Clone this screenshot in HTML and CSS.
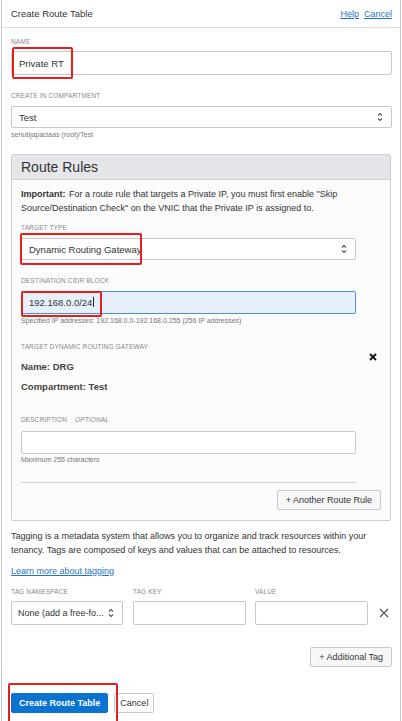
FILE: index.html
```html
<!DOCTYPE html>
<html>
<head>
<meta charset="utf-8">
<link rel="stylesheet" href="styles.css">
</head>
<body>
<div class="dialog">
  <div class="hdr">
    <span class="title">Create Route Table</span>
    <span class="links"><a>Help</a><a>Cancel</a></span>
  </div>
  <div class="content">
    <div class="field f-name">
      <div class="lbl">Name</div>
      <div class="input h24 annotated"><span class="val">Private RT</span><span class="redbox rb-name"></span></div>
    </div>
    <div class="field f-comp">
      <div class="lbl">Create in Compartment</div>
      <div class="input select h22"><span class="val">Test</span>
        <svg class="chev" viewBox="0 0 6 10" width="6" height="10"><path d="M1 3.5 L3 1.5 L5 3.5 M1 6.5 L3 8.5 L5 6.5" fill="none" stroke="#555" stroke-width="1.1"/></svg>
      </div>
      <div class="help">sehubjapaciaas (root)/Test</div>
    </div>

    <div class="rules">
      <div class="rules-hdr">Route Rules</div>
      <div class="rules-body">
        <p class="important"><b>Important:</b> For a route rule that targets a Private IP, you must first enable "Skip Source/Destination Check" on the VNIC that the Private IP is assigned to.</p>
        <div class="rfield f-tt">
          <div class="lbl">Target Type</div>
          <div class="input select h22 annotated"><span class="val">Dynamic Routing Gateway</span>
            <svg class="chev" viewBox="0 0 6 10" width="6" height="10"><path d="M1 3.5 L3 1.5 L5 3.5 M1 6.5 L3 8.5 L5 6.5" fill="none" stroke="#555" stroke-width="1.1"/></svg>
            <span class="redbox rb-tt"></span>
          </div>
        </div>
        <div class="rfield f-cidr">
          <div class="lbl">Destination CIDR Block</div>
          <div class="input focus h23 annotated"><span class="val">192.168.0.0/24<span class="caret"></span></span><span class="redbox rb-cidr"></span></div>
          <div class="help">Specified IP addresses: 192.168.0.0-192.168.0.255 (256 IP addresses)</div>
        </div>
        <div class="drg">
          <div class="lbl">Target Dynamic Routing Gateway</div>
          <div class="kv kv1">Name: DRG</div>
          <div class="kv kv2">Compartment: Test</div>
          <svg class="close-x" viewBox="0 0 8 8" width="8" height="8"><path d="M1 1 L7 7 M7 1 L1 7" stroke="#111" stroke-width="1.8"/></svg>
        </div>
        <div class="rfield f-desc">
          <div class="lbl">Description <i class="opt">Optional</i></div>
          <div class="input h23"></div>
          <div class="help">Maximum 255 characters</div>
        </div>
        <div class="divider"></div>
        <div class="btn-row"><button class="btn">+ Another Route Rule</button></div>
      </div>
    </div>

    <p class="tagging">Tagging is a metadata system that allows you to organize and track resources within your tenancy. Tags are composed of keys and values that can be attached to resources.</p>
    <a class="learn">Learn more about tagging</a>

    <div class="tags">
      <div class="tcol t-ns">
        <div class="lbl">Tag Namespace</div>
        <div class="input select h24"><span class="val">None (add a free-fo...</span>
          <svg class="chev" viewBox="0 0 6 10" width="6" height="10"><path d="M1 3.5 L3 1.5 L5 3.5 M1 6.5 L3 8.5 L5 6.5" fill="none" stroke="#555" stroke-width="1.1"/></svg>
        </div>
      </div>
      <div class="tcol t-key">
        <div class="lbl">Tag Key</div>
        <div class="input h24"></div>
      </div>
      <div class="tcol t-val">
        <div class="lbl">Value</div>
        <div class="input h24"></div>
      </div>
      <svg class="tag-x" viewBox="0 0 10 10" width="10" height="10"><path d="M1 1 L9 9 M9 1 L1 9" stroke="#555" stroke-width="1.1"/></svg>
    </div>

    <div class="btn-row add-tag"><button class="btn">+ Additional Tag</button></div>

    <div class="footer annotated">
      <button class="btn primary">Create Route Table</button>
      <button class="btn cancel">Cancel</button>
      <span class="redbox rb-create"></span>
    </div>
  </div>
</div>
</body>
</html>
```

FILE: styles.css
```css
* { box-sizing: border-box; }
html, body { margin: 0; padding: 0; background: #fff; }
body {
  font-family: "Liberation Sans", Arial, sans-serif;
  color: #333;
}
.dialog {
  margin: 0 1px;
  height: 721px;
  border-left: 1px solid #c9c9c9;
  border-right: 1px solid #c9c9c9;
  overflow: hidden;
}
.hdr {
  height: 28px;
  border-bottom: 1px solid #dcdcdc;
  display: flex;
  align-items: center;
  justify-content: space-between;
  padding: 0 8px 0 9px;
}
.title { font-size: 9.5px; color: #333; }
.links { display: flex; gap: 5px; font-size: 9px; }
.links a { color: #1f74c8; text-decoration: underline; }

.content { padding: 10px 8px 0 9px; }

.lbl {
  font-size: 6.5px;
  line-height: 8px;
  text-transform: uppercase;
  color: #8a8a8a;
  letter-spacing: 0.15px;
  margin-bottom: 6px;
}
.input {
  position: relative;
  border: 1px solid #c8c8c8;
  border-radius: 2px;
  background: #fff;
  display: flex;
  align-items: center;
  padding: 0 7px;
  font-size: 9.5px;
  color: #333;
}
.h24 { height: 24px; }
.h23 { height: 23px; }
.h22 { height: 22px; }
.select .val { flex: 1; white-space: nowrap; }
.chev { position: absolute; right: 8px; top: 50%; margin-top: -5px; }
.help { font-size: 7px; line-height: 9px; color: #777; margin-top: 2px; }

.f-name .lbl { margin-bottom: 5px; }
.f-comp { margin-top: 17px; }

.annotated { position: relative; }
.redbox {
  position: absolute;
  border: 2px solid #e3201e;
  border-radius: 2px;
  pointer-events: none;
}
.rb-name { left: 0px; top: -5px; width: 61px; height: 32px; }
.rb-tt { left: -2px; top: -6px; width: 122px; height: 32px; }
.rb-cidr { left: -1px; top: -1px; width: 81px; height: 26px; }
.rb-create { left: -3px; top: -10px; width: 110px; height: 40px; }

.rules {
  margin-top: 15px;
  margin-right: 1px;
  border: 1px solid #cfcfcf;
  border-radius: 2px;
}
.rules-hdr {
  height: 25px;
  background: #e4e6e9;
  border-bottom: 1px solid #cfcfcf;
  font-size: 14px;
  line-height: 24px;
  padding-left: 9px;
  color: #333;
}
.rules-body {
  background: #fbfbfb;
  padding: 7px 9px 10px 9px;
}
.important {
  margin: 0;
  font-size: 9px;
  line-height: 14px;
  color: #333;
}
.important b { font-weight: bold; color: #333; margin-right: 1px; }
.rfield { width: 335px; }
.f-tt { margin-top: 9px; }
.f-cidr { margin-top: 17px; }
.focus {
  background: #e8f0fc;
  border: 1.5px solid #4a8fe0;
}
.caret { display: inline-block; width: 1px; height: 10px; background: #222; vertical-align: -1px; margin-left: 1px; }

.drg { position: relative; margin-top: 18px; }
.drg .lbl { margin-bottom: 10px; }
.kv { font-size: 9.5px; line-height: 12px; font-weight: bold; color: #444; }
.kv2 { margin-top: 8px; }
.close-x { position: absolute; right: 4px; top: 10px; }

.f-desc { margin-top: 23px; }
.f-desc .lbl { margin-bottom: 7px; }
.opt { margin-left: 6px; font-style: italic; }
.f-desc .help { margin-top: 1px; }

.divider { width: 335px; height: 1px; background: #cfcfcf; margin-top: 18px; }
.btn-row { display: flex; justify-content: flex-end; margin-top: 7px; }
.btn {
  font-family: "Liberation Sans", Arial, sans-serif;
  font-size: 9px;
  height: 20px;
  padding: 0 8px;
  border: 1px solid #c8c8c8;
  border-radius: 2px;
  background: #f7f7f7;
  color: #333;
}

.tagging {
  margin: 8px 0 0;
  font-size: 9px;
  line-height: 14px;
  color: #333;
}
.learn {
  display: block;
  margin-top: 8px;
  font-size: 9px;
  line-height: 12px;
  color: #1f74c8;
  text-decoration: underline;
}
.tags {
  margin-top: 11px;
  display: flex;
  align-items: flex-end;
  position: relative;
}
.tcol { width: 113px; }
.t-ns { width: 112px; }
.t-key { margin-left: 10px; }
.t-val { margin-left: 9px; }
.tcol .lbl { margin-bottom: 5px; }
.t-ns .input { padding-left: 6px; font-size: 9px; }
.tag-x { margin: 0 0 7px 11px; }

.add-tag { margin-top: 22px; }

.footer {
  margin-top: 26px;
  display: flex;
  gap: 6px;
}
.primary {
  background: #0a72cf;
  border-color: #0a72cf;
  color: #fff;
  font-weight: bold;
  padding: 0 7px;
}
.cancel { background: #fff; padding: 0 5px; }
```
